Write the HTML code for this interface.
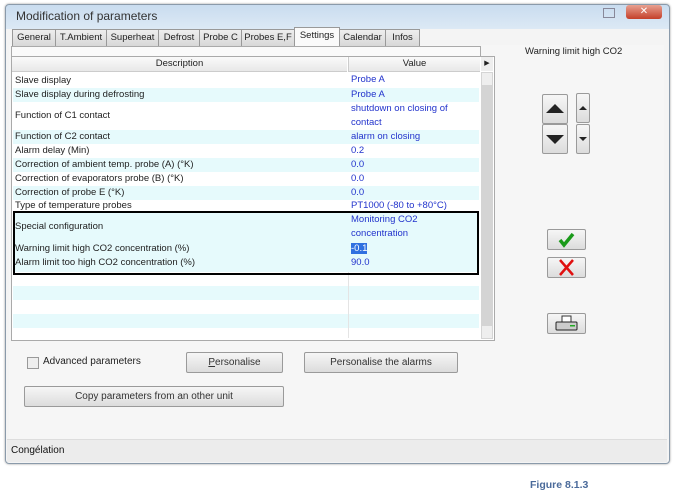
<!DOCTYPE html><html><head><style>
body{margin:0;width:678px;height:497px;background:#fff;position:relative;overflow:hidden;font-family:"Liberation Sans","DejaVu Sans",sans-serif;font-size:9.5px;color:#222}
.a{position:absolute}
.win{left:5px;top:4px;width:663px;height:458px;border:1px solid #8a9aaa;border-radius:4px;background:linear-gradient(#c9dcef,#dce9f5 24px,#f4f4f4 24px);box-shadow:0 0 2px #999}
.title{left:16px;top:9px;font-size:12px;color:#333}
.tab{position:absolute;top:29px;height:16px;background:linear-gradient(#eee,#d8d8d8);border:1px solid #999;border-bottom:none;line-height:16px;text-align:center;font-size:9.5px}
.btn{position:absolute;border:1px solid #9a9a9a;border-radius:2px;background:linear-gradient(#f6f6f6,#dcdcdc);text-align:center;font-size:10px;color:#333}
.row{position:absolute;left:13px;width:466px}
.row span{position:absolute;left:2px}
.row b{position:absolute;left:338px;font-weight:normal;color:#2233cc;line-height:14px}
.c{background:#e6fafc}
</style></head><body>
<div class="a win"></div>
<div class="a title">Modification of parameters</div>
<div class="a" style="left:603px;top:8px;width:10px;height:8px;border:1px solid #889;"></div>
<div class="a" style="left:626px;top:5px;width:36px;height:14px;border-radius:3px;background:linear-gradient(#e8a090,#c4402a);color:#fff;text-align:center;font-size:10px;line-height:14px">✕</div>
<div class="a" style="left:9px;top:45px;width:655px;height:394px;background:#f6f6f6"></div>
<div class="tab" style="left:12px;width:42px">General</div>
<div class="tab" style="left:55px;width:50px">T.Ambient</div>
<div class="tab" style="left:106px;width:51px">Superheat</div>
<div class="tab" style="left:158px;width:40px">Defrost</div>
<div class="tab" style="left:199px;width:41px">Probe C</div>
<div class="tab" style="left:241px;width:52px">Probes E,F</div>
<div class="tab" style="left:294px;width:44px;top:27px;height:19px;background:#fafafa">Settings</div>
<div class="tab" style="left:339px;width:45px">Calendar</div>
<div class="tab" style="left:385px;width:33px">Infos</div>
<div class="a" style="left:11px;top:46px;width:468px;height:10px;border:1px solid #aaa;border-bottom:none;background:#fafafa"></div>
<div class="a" style="left:11px;top:56px;width:482px;height:283px;border:1px solid #aaa;background:#fff"></div>
<div class="a" style="left:12px;top:57px;width:335px;height:14px;background:linear-gradient(#fafafa,#e8e8e8);border-bottom:1px solid #ccc;text-align:center;line-height:14px">Description</div>
<div class="a" style="left:348px;top:57px;width:131px;height:14px;background:linear-gradient(#fafafa,#e8e8e8);border-bottom:1px solid #ccc;border-left:1px solid #ccc;text-align:center;line-height:14px">Value</div>
<div class="a" style="left:481px;top:57px;width:12px;height:14px;background:#eee;font-size:7px;line-height:14px;text-align:center">▶</div>
<div class="a" style="left:481px;top:72px;width:12px;height:267px;background:#d4d4d4"></div>
<div class="a" style="left:482px;top:73px;width:10px;height:12px;background:#eee"></div>
<div class="a" style="left:482px;top:326px;width:10px;height:12px;background:#eee"></div>
<div class="row" style="top:73px;height:15px;line-height:15px"><span>Slave display</span><b>Probe A</b></div>
<div class="row c" style="top:88px;height:14px;line-height:14px"><span>Slave display during defrosting</span><b>Probe A</b></div>
<div class="row" style="top:102px;height:28px;line-height:28px"><span>Function of C1 contact</span><b style="top:0">shutdown on closing of<br>contact</b></div>
<div class="row c" style="top:130px;height:14px;line-height:14px"><span>Function of C2 contact</span><b>alarm on closing</b></div>
<div class="row" style="top:144px;height:14px;line-height:14px"><span>Alarm delay (Min)</span><b>0.2</b></div>
<div class="row c" style="top:158px;height:14px;line-height:14px"><span>Correction of ambient temp. probe (A) (°K)</span><b>0.0</b></div>
<div class="row" style="top:172px;height:14px;line-height:14px"><span>Correction of evaporators probe (B) (°K)</span><b>0.0</b></div>
<div class="row c" style="top:186px;height:14px;line-height:14px"><span>Correction of probe E (°K)</span><b>0.0</b></div>
<div class="row" style="top:200px;height:12px;line-height:12px"><span>Type of temperature probes</span><b style="line-height:12px">PT1000 (-80 to +80°C)</b></div>
<div class="row c" style="top:212px;height:30px;line-height:30px"><span>Special configuration</span><b style="top:1px">Monitoring CO2<br>concentration</b></div>
<div class="row c" style="top:242px;height:14px;line-height:14px"><span>Warning limit high CO2 concentration (%)</span><b><i style="font-style:normal;background:#3070e0;color:#fff">-0.1</i></b></div>
<div class="row c" style="top:256px;height:16px;line-height:14px"><span>Alarm limit too high CO2 concentration (%)</span><b>90.0</b></div>
<div class="row c" style="top:286px;height:14px"></div>
<div class="row c" style="top:314px;height:14px"></div>
<div class="a" style="left:348px;top:272px;width:1px;height:66px;background:#e4e4e4"></div>
<div class="a" style="left:13px;top:211px;width:462px;height:60px;border:2px solid #000"></div>
<div class="a" style="left:525px;top:46px;font-size:9.5px">Warning limit high CO2</div>
<div class="btn" style="left:542px;top:94px;width:24px;height:28px"><svg width="24" height="28"><path d="M3 18 L12 9 L21 18Z" fill="#222"/></svg></div>
<div class="btn" style="left:542px;top:124px;width:24px;height:28px"><svg width="24" height="28"><path d="M3 10 L12 19 L21 10Z" fill="#222"/></svg></div>
<div class="btn" style="left:576px;top:93px;width:12px;height:28px"><svg width="12" height="28"><path d="M2 16 L6 12 L10 16Z" fill="#222"/></svg></div>
<div class="btn" style="left:576px;top:124px;width:12px;height:28px"><svg width="12" height="28"><path d="M2 12 L6 16 L10 12Z" fill="#222"/></svg></div>
<div class="btn" style="left:547px;top:229px;width:37px;height:19px"><svg width="37" height="19"><path d="M12 10 L16 15 L25 4" stroke="#1a9a1a" stroke-width="3.5" fill="none"/></svg></div>
<div class="btn" style="left:547px;top:257px;width:37px;height:19px"><svg width="37" height="19"><path d="M12 2 L25 17 M25 2 L12 17" stroke="#e01010" stroke-width="2.5"/></svg></div>
<div class="btn" style="left:547px;top:313px;width:37px;height:19px"><svg width="37" height="19"><rect x="14" y="2" width="9" height="7" fill="#fff" stroke="#333"/><rect x="8" y="8" width="21" height="8" rx="1" fill="#ccc" stroke="#222"/><rect x="22" y="11" width="5" height="1.5" fill="#2a2"/></svg></div>
<div class="a" style="left:27px;top:357px;width:10px;height:10px;border:1px solid #999;background:#eee"></div>
<div class="a" style="left:43px;top:356px;font-size:10px">Advanced parameters</div>
<div class="btn" style="left:186px;top:352px;width:95px;height:19px;line-height:19px"><u>P</u>ersonalise</div>
<div class="btn" style="left:304px;top:352px;width:152px;height:19px;line-height:19px">Personalise the alarms</div>
<div class="btn" style="left:24px;top:386px;width:258px;height:19px;line-height:19px">Copy parameters from an other unit</div>
<div class="a" style="left:7px;top:439px;width:656px;height:22px;background:#ececec;border-top:1px solid #ddd;line-height:22px;padding-left:4px;font-size:10px;color:#111">Congélation</div>
<div class="a" style="left:530px;top:479px;font-size:10.5px;font-weight:bold;color:#4a6a9a">Figure 8.1.3</div>
</body></html>
